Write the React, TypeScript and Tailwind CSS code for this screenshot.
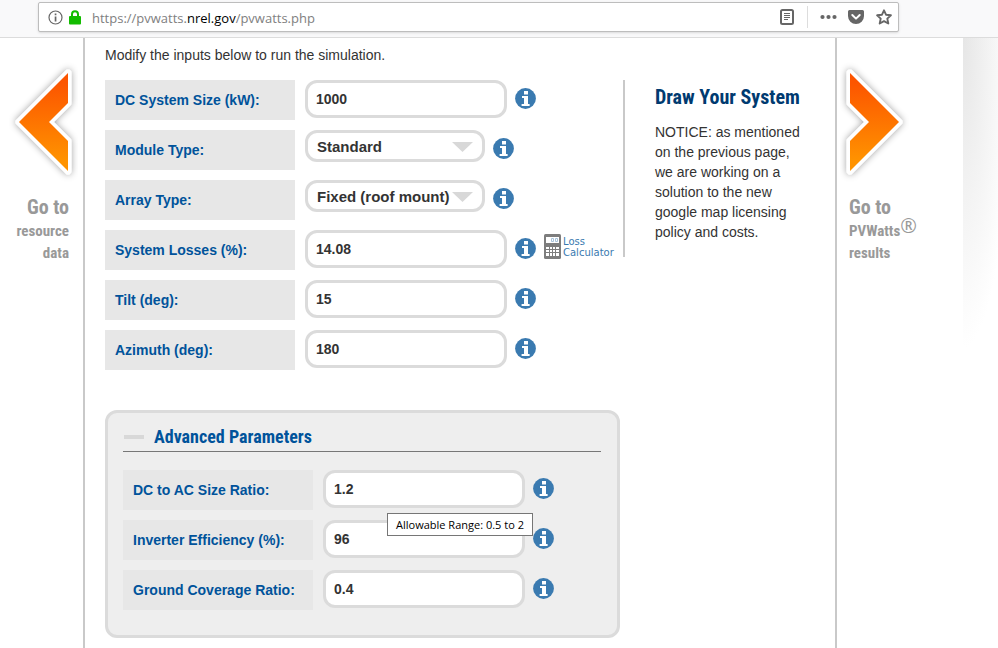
import React, { useState } from 'react';

interface FieldProps {
  id: string;
  label: string;
  value: string;
  options?: string[];
  tooltip?: string;
  children?: React.ReactNode;
}

const systemFields: FieldProps[] = [
  { id: 'system-size', label: 'DC System Size (kW):', value: '1000' },
  { id: 'module-type', label: 'Module Type:', value: 'Standard', options: ['Standard', 'Premium', 'Thin film'] },
  { id: 'array-type', label: 'Array Type:', value: 'Fixed (roof mount)', options: ['Fixed (open rack)', 'Fixed (roof mount)', '1-Axis Tracking'] },
  { id: 'losses', label: 'System Losses (%):', value: '14.08' },
  { id: 'tilt', label: 'Tilt (deg):', value: '15' },
  { id: 'azimuth', label: 'Azimuth (deg):', value: '180' },
];

const advancedFields: FieldProps[] = [
  { id: 'dc-ac-ratio', label: 'DC to AC Size Ratio:', value: '1.2', tooltip: 'Allowable Range: 0.5 to 2' },
  { id: 'inverter', label: 'Inverter Efficiency (%):', value: '96' },
  { id: 'coverage', label: 'Ground Coverage Ratio:', value: '0.4' },
];

function InfoIcon() {
  return (
    <svg width="21" height="21" viewBox="0 0 21 21" aria-hidden="true">
      <circle cx="10.5" cy="10.5" r="10.4" fill="#3a7ab0" />
      <path d="M9 3h4v3.4H9zM7 8h6v8h1.6v2H6.6v-2H9v-6H7z" fill="#fff" />
    </svg>
  );
}

function CalculatorIcon() {
  return (
    <svg width="17" height="25" viewBox="0 0 17 25" aria-hidden="true">
      <rect width="17" height="25" rx="1.5" fill="#7d7d7d" />
      <rect x="2" y="3" width="13" height="6" fill="#fff" />
      <path d="M7.5 4.5h2v3h-2zM11.5 4.5h2v3h-2z" fill="none" stroke="#a9c4dc" />
      <path d="M2 13h13v9H2z" fill="#fff" />
      <path d="M5.5 13v9M8.5 13v9M11.500 13v9M2 15.500h13M2 18.500h13" stroke="#7d7d7d" />
    </svg>
  );
}

function Arrow({ id, points }: { id: string; points: string }) {
  return (
    <svg width="72" height="120" viewBox="0 0 72 120" aria-hidden="true">
      <defs>
        <linearGradient id={id} x1="0" y1="0" x2="0" y2="1">
          <stop offset="0.1" stopColor="#fc5500" />
          <stop offset="0.9" stopColor="#ff9300" />
        </linearGradient>
        <filter id={id + '-shadow'} x="-20%" y="-20%" width="140%" height="140%">
          <feDropShadow dx="0" dy="0" stdDeviation="3.5" floodColor="#000" floodOpacity="0.38" />
        </filter>
      </defs>
      <polygon points={points} fill="#fff" stroke="#fff" strokeWidth="7" strokeLinejoin="round" filter={`url(#${id}-shadow)`} />
      <polygon points={points} fill={`url(#${id})`} />
    </svg>
  );
}

function Field({ id, label, value, options, tooltip, children }: FieldProps) {
  const [current, setCurrent] = useState(value);

  return (
    <div className="relative flex h-10 items-start">
      <label htmlFor={id} className="mr-2.5 flex h-10 w-[190px] shrink-0 items-center bg-[#e7e7e7] pl-2.5 text-sm font-bold whitespace-nowrap text-[#00539b]">
        {label}
      </label>
      {options ? (
        <span className="relative w-[180px] shrink-0">
          <select
            id={id}
            value={current}
            onChange={(e) => setCurrent(e.target.value)}
            className="block h-8 w-full appearance-none rounded-xl border-3 border-[#dbdbdb] bg-white pt-0.5 pl-[9px] text-[15px] font-bold text-[#333]"
          >
            {options.map((option) => (
              <option key={option}>{option}</option>
            ))}
          </select>
          <svg className="pointer-events-none absolute top-3 right-3" width="21" height="10" viewBox="0 0 21 10" aria-hidden="true">
            <path d="M0 0h21L10.5 10z" fill="#d8d8d8" />
          </svg>
        </span>
      ) : (
        <input
          id={id}
          type="text"
          value={current}
          onChange={(e) => setCurrent(e.target.value)}
          className="h-[38px] w-[202px] shrink-0 rounded-xl border-3 border-[#dbdbdb] bg-white px-2 text-sm font-bold text-[#333]"
        />
      )}
      <button type="button" aria-label={'About ' + label} className="mt-2 ml-2 shrink-0">
        <InfoIcon />
      </button>
      {children}
      {tooltip && (
        <span role="tooltip" className="absolute top-[43px] left-[264px] z-10 flex h-[23px] w-[146px] items-center justify-center border border-[#767676] bg-white font-['Open_Sans',sans-serif] text-[11px] whitespace-nowrap text-black">
          {tooltip}
        </span>
      )}
    </div>
  );
}

function AddressBar() {
  return (
    <header className="border-b border-[#dcdcdc] bg-[#f9f9fa] pt-0.5 pr-[99px] pb-[5px] pl-[38px]">
      <div className="flex h-[30px] items-center rounded-xs border border-[#bdbdbd] bg-white pr-1.5 pl-[9px] shadow-sm">
        <button type="button" aria-label="Site information">
          <svg width="15" height="15" viewBox="0 0 15 15" aria-hidden="true">
            <circle cx="7.5" cy="7.5" r="6.5" fill="none" stroke="#666" strokeWidth="1.2" />
            <path d="M6.7 3.5h1.7v1.7H6.7zM6.7 6.5h1.7v5H6.7z" fill="#666" />
          </svg>
        </button>
        <svg className="ml-[6px]" width="12" height="15" viewBox="0 0 12 15" aria-hidden="true">
          <path d="M3 7V4.2a3 3 0 0 1 6 0V7" fill="none" stroke="#12bc00" strokeWidth="2" />
          <rect y="6" width="12" height="8.5" rx="1" fill="#12bc00" />
        </svg>
        <div role="textbox" aria-label="Address" className="ml-[11px] flex-1 pt-0.5 font-['Open_Sans',sans-serif] text-[13px] whitespace-nowrap text-[#808080]">
          https://pvwatts.<span className="text-black">nrel.gov</span>/pvwatts.php
        </div>
        <button type="button" aria-label="Reader view">
          <svg width="14" height="16" viewBox="0 0 14 16" aria-hidden="true">
            <rect x="1" y="1" width="12" height="14" rx="1.5" fill="none" stroke="#666" strokeWidth="2" />
            <path d="M4 4.5h6M4 6.5h6M4 8.5h6M4 10.5h4" stroke="#666" />
          </svg>
        </button>
        <span className="mr-3 ml-[13px] h-[22px] w-px bg-[#ddd]" />
        <button type="button" aria-label="Page actions">
          <svg width="17" height="16" viewBox="0 0 17 16" aria-hidden="true">
            <circle cx="2.5" cy="8" r="2.1" fill="#666" />
            <circle cx="8.5" cy="8" r="2.1" fill="#666" />
            <circle cx="14.5" cy="8" r="2.1" fill="#666" />
          </svg>
        </button>
        <button type="button" aria-label="Save to Pocket" className="ml-[11px]">
          <svg width="16" height="16" viewBox="0 0 16 16" aria-hidden="true">
            <path d="M1.5 1h13A1.5 1.5 0 0 1 16 2.5V7a8 8 0 0 1-16 0V2.5A1.5 1.5 0 0 1 1.5 1z" fill="#666" />
            <path d="M4.3 6L8 9.6 11.7 6" fill="none" stroke="#fff" strokeWidth="2" strokeLinecap="round" strokeLinejoin="round" />
          </svg>
        </button>
        <button type="button" aria-label="Bookmark this page" className="ml-3">
          <svg width="16" height="16" viewBox="0 0 16 16" aria-hidden="true">
            <path d="M8 1.3l2 4.4 4.9.6-3.600 3.300 1 4.900L8 12.100l-4.300 2.400 1-4.900L1.100 6.300 6 5.700z" fill="none" stroke="#666" strokeWidth="1.900" strokeLinejoin="round" />
          </svg>
        </button>
      </div>
    </header>
  );
}

export default function App() {
  return (
    <div className="flex min-h-screen flex-col bg-white font-['Liberation_Sans',Arial,sans-serif] text-sm text-[#333]">
      <AddressBar />

      <div className="flex flex-1">
        {/* --- PREVIOUS STEP --- */}
        <nav className="w-[83px] shrink-0 pt-6 pr-[14px] text-right font-['Roboto_Condensed','Liberation_Sans_Narrow',sans-serif] font-bold text-[#999]">
          <a href="#resource" className="flex flex-col items-end">
            <span className="-mr-2.5"><Arrow id="prev" points="61,11 12,60 61,109 61,79 42,60 61,41" /></span>
            <span className="mt-3 text-xl leading-[26px]">Go to</span>
            <span className="text-[15px] leading-[22px]">resource</span>
            <span className="text-[15px] leading-[22px]">data</span>
          </a>
        </nav>

        <main className="flex-1 border-x-2 border-[#c9c9c9] px-5 pt-[7px]">
          <p className="mb-[15px] leading-5">Modify the inputs below to run the simulation.</p>

          <div className="flex items-start">
            <form className="flex w-[518px] shrink-0 flex-col gap-2.5">
              {systemFields.map((field) => (
                <Field key={field.id} {...field}>
                  {field.id === 'losses' && (
                    <a href="#loss-calculator" className="mt-1 ml-2 flex items-center gap-0.5 font-['DejaVu_Sans',Verdana,sans-serif] text-[10px] leading-[11px] text-[#3a7ab0]">
                      <CalculatorIcon />
                      <span>Loss<br />Calculator</span>
                    </a>
                  )}
                </Field>
              ))}
            </form>

            <aside className="flex flex-1">
              <div className="h-[177px] w-0.5 shrink-0 bg-[#c9c9c9]" />
              <div className="pl-[30px]">
                <h2 className="mb-2 font-['Roboto_Condensed','Liberation_Sans_Narrow',sans-serif] text-xl leading-[34px] font-bold whitespace-nowrap text-[#003a70]">
                  Draw Your System
                </h2>
                <p className="max-w-[150px] leading-5">
                  NOTICE: as mentioned on the previous page, we are working on a solution to the new google map licensing policy and costs.
                </p>
              </div>
            </aside>
          </div>

          {/* --- ADVANCED PARAMETERS --- */}
          <section className="mt-10 mb-2.5 w-[515px] rounded-xl border-3 border-[#dbdbdb] bg-[#eee] pt-2.5 pr-4 pb-[25px] pl-[15px]">
            <h3 className="mb-[18px] border-b border-[#777] font-['Roboto_Condensed','Liberation_Sans_Narrow',sans-serif] text-lg font-bold text-[#00539b]">
              <button type="button" className="flex items-center">
                <span className="mr-2.5 ml-px h-1 w-5 bg-[#d8d8d8]" />
                Advanced Parameters
              </button>
            </h3>
            <div className="flex flex-col gap-2.5">
              {advancedFields.map((field) => (
                <Field key={field.id} {...field} />
              ))}
            </div>
          </section>
        </main>

        {/* --- NEXT STEP --- */}
        <nav className="w-[126px] shrink-0 pt-6 pl-3 font-['Roboto_Condensed','Liberation_Sans_Narrow',sans-serif] font-bold text-[#999]">
          <a href="#results" className="flex flex-col items-start">
            <span className="-ml-2.5"><Arrow id="next" points="11,11 60,60 11,109 11,79 30,60 11,41" /></span>
            <span className="mt-3 text-xl leading-[26px]">Go to</span>
            <span className="flex text-[15px] leading-[22px]">
              PVWatts
              <span className="-mt-2 h-0 font-['Open_Sans',sans-serif] text-xl font-normal">®</span>
            </span>
            <span className="text-[15px] leading-[22px]">results</span>
          </a>
        </nav>
        <div className="w-[35px] shrink-0 bg-[radial-gradient(ellipse_50px_310px_at_top_left,#e6e6e6,#ffffff)]" />
      </div>
    </div>
  );
}
